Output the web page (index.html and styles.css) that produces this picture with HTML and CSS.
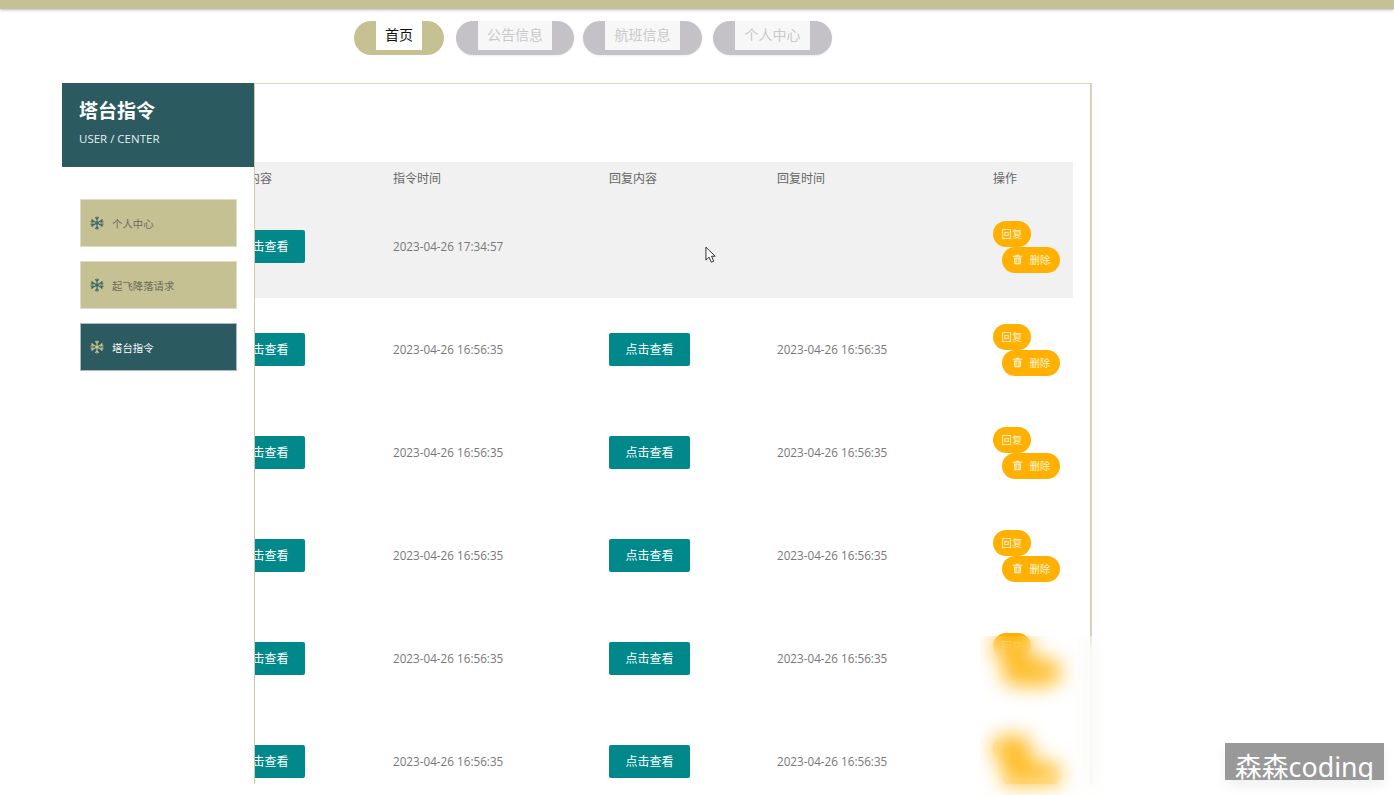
FILE: index.html
```html
<!DOCTYPE html>
<html lang="zh-CN">
<head>
<meta charset="utf-8">
<title>塔台指令</title>
<link rel="stylesheet" href="styles.css">
</head>
<body>
<svg class="defs" width="0" height="0" aria-hidden="true">
  <symbol id="flake" viewBox="0 0 14 14">
    <g fill="none" stroke="currentColor" stroke-width="1.1" stroke-linecap="round">
      <path d="M7 .8v12.400M1.600 3.900l10.800 6.200M1.600 10.100l10.800-6.200"/>
      <path d="M5.500 1.600 7 3l1.500-1.400M5.500 12.400 7 11l1.500 1.400M1 5.900l2.100.1-.7-2.100M13 5.900l-2.100.1.700-2.100M1 8.100l2.100-.1-.7 2.100M13 8.100l-2.100-.1.700 2.100"/>
    </g>
    <circle cx="7" cy="7" r="1.500" fill="currentColor"/>
  </symbol>
  <symbol id="trash" viewBox="0 0 12 12">
    <path fill="currentColor" d="M.8 2h10.400v1.100H.8zM4 .7h4V2H4zM2 3.800h8l-.5 7.500h-7zM3.900 5v5h.9V5zm1.700 0v5h.9V5zm1.600 0v5h.9V5z"/>
  </symbol>
  <symbol id="cursor" viewBox="0 0 14 20">
    <path d="M1 1v14l3.400-3.200 2.400 5.400 2.600-1.100-2.400-5.300H11z" fill="#fff" stroke="#222" stroke-width="1"/>
  </symbol>
</svg>

<header class="topbar"></header>

<nav class="nav">
  <a class="pill pill-active"><span class="pill-label">首页</span></a>
  <a class="pill"><span class="pill-label">公告信息</span></a>
  <a class="pill"><span class="pill-label">航班信息</span></a>
  <a class="pill"><span class="pill-label">个人中心</span></a>
</nav>

<main class="main">
  <aside class="sidebar">
    <div class="side-head">
      <h1 class="side-title">塔台指令</h1>
      <p class="side-sub">USER / CENTER</p>
    </div>
    <ul class="menu">
      <li class="menu-item"><svg class="flake"><use href="#flake"/></svg>个人中心</li>
      <li class="menu-item"><svg class="flake"><use href="#flake"/></svg>起飞降落请求</li>
      <li class="menu-item menu-item-active"><svg class="flake"><use href="#flake"/></svg>塔台指令</li>
    </ul>
  </aside>

  <section class="card">
    <table class="table">
      <colgroup>
        <col class="c1"><col class="c2"><col class="c3"><col class="c4"><col class="c5">
      </colgroup>
      <thead>
        <tr><th>指令内容</th><th>指令时间</th><th>回复内容</th><th>回复时间</th><th>操作</th></tr>
      </thead>
      <tbody>
        <tr class="row-hover">
          <td><button class="view">点击查看</button></td>
          <td class="time">2023-04-26 17:34:57</td>
          <td></td>
          <td></td>
          <td><div class="ops"><button class="op">回复</button><button class="op op-del"><svg class="trash"><use href="#trash"/></svg>删除</button></div></td>
        </tr>
        <tr>
          <td><button class="view">点击查看</button></td>
          <td class="time">2023-04-26 16:56:35</td>
          <td><button class="view">点击查看</button></td>
          <td class="time">2023-04-26 16:56:35</td>
          <td><div class="ops"><button class="op">回复</button><button class="op op-del"><svg class="trash"><use href="#trash"/></svg>删除</button></div></td>
        </tr>
        <tr>
          <td><button class="view">点击查看</button></td>
          <td class="time">2023-04-26 16:56:35</td>
          <td><button class="view">点击查看</button></td>
          <td class="time">2023-04-26 16:56:35</td>
          <td><div class="ops"><button class="op">回复</button><button class="op op-del"><svg class="trash"><use href="#trash"/></svg>删除</button></div></td>
        </tr>
        <tr>
          <td><button class="view">点击查看</button></td>
          <td class="time">2023-04-26 16:56:35</td>
          <td><button class="view">点击查看</button></td>
          <td class="time">2023-04-26 16:56:35</td>
          <td><div class="ops"><button class="op">回复</button><button class="op op-del"><svg class="trash"><use href="#trash"/></svg>删除</button></div></td>
        </tr>
        <tr>
          <td><button class="view">点击查看</button></td>
          <td class="time">2023-04-26 16:56:35</td>
          <td><button class="view">点击查看</button></td>
          <td class="time">2023-04-26 16:56:35</td>
          <td><div class="ops"><button class="op">回复</button><button class="op op-del"><svg class="trash"><use href="#trash"/></svg>删除</button></div></td>
        </tr>
        <tr>
          <td><button class="view">点击查看</button></td>
          <td class="time">2023-04-26 16:56:35</td>
          <td><button class="view">点击查看</button></td>
          <td class="time">2023-04-26 16:56:35</td>
          <td><div class="ops"><button class="op">回复</button><button class="op op-del"><svg class="trash"><use href="#trash"/></svg>删除</button></div></td>
        </tr>
      </tbody>
    </table>
  </section>
</main>

<svg class="cursor"><use href="#cursor"/></svg>
<div class="blur"></div>
<div class="watermark">森森coding</div>
</body>
</html>
```

FILE: styles.css
```css
* { box-sizing: border-box; }

html, body {
  margin: 0;
  height: 795px;
  overflow: hidden;
  background: #fff;
  font-family: "Open Sans", "Noto Sans CJK SC", sans-serif;
  font-size: 12px;
}

.defs { position: absolute; }

.topbar {
  height: 9px;
  background: #c5c193;
  box-shadow: 0 1px 3px rgba(120, 110, 130, .5);
}

.nav {
  display: flex;
  height: 34px;
  margin: 12px 0 28px;
  padding-left: 354px;
}

.pill {
  display: block;
  height: 34px;
  padding: 0 22px;
  border-radius: 17px;
  background: #c4c2c6;
  box-shadow: 0 1px 2px rgba(196, 194, 198, .3);
}
.pill:nth-child(1) { margin-right: 12px; }
.pill:nth-child(2) { margin-right: 9px; }
.pill:nth-child(3) { margin-right: 11px; }
.pill:nth-child(n+3) .pill-label { width: 75px; }

.pill-active {
  background: #c5c193;
  box-shadow: none;
}

.pill-label {
  display: block;
  width: 74px;
  height: 29px;
  background: #f7f7f8;
  color: #c9c9cb;
  font-size: 14px;
  line-height: 27px;
  text-align: center;
}

.pill-active .pill-label {
  width: 46px;
  background: #fff;
  color: #111;
}

.main {
  display: flex;
  align-items: flex-start;
  height: 701px;
  padding-left: 62px;
  overflow: hidden;
}

.sidebar {
  flex: 0 0 192px;
}

.side-head {
  height: 84px;
  padding: 14px 17px 0;
  background: #2b5b60;
  color: #fff;
}

.side-title {
  margin: 0;
  font-size: 19px;
  font-weight: 700;
  line-height: 28px;
}

.side-sub {
  margin: 5px 0 0;
  font-size: 11.500px;
  line-height: 18px;
  color: #e6eeee;
}

.menu {
  display: flex;
  flex-direction: column;
  gap: 14px;
  margin: 32px 0 0 18px;
  padding: 0;
  list-style: none;
}

.menu-item {
  display: flex;
  align-items: center;
  width: 157px;
  height: 48px;
  padding-left: 9px;
  background: #c5c193;
  border: 1px solid #dedcc6;
  color: #6a6a5c;
  font-size: 10.400px;
}

.menu-item-active {
  background: #2b5b60;
  border-color: #a9bcb9;
  color: #fff;
}

.flake {
  flex: none;
  width: 14px;
  height: 14px;
  margin-right: 8px;
  color: #3c6667;
}

.menu-item-active .flake { color: #c5c193; }

.card {
  flex: 0 0 838px;
  height: 701px;
  padding: 78px 0 0;
  overflow: hidden;
  background: #fff;
  border-top: 1px solid #dcd8b4;
  border-left: 1px solid #cfcba6;
  border-right: 2px solid #d6d3b4;
}

.table {
  width: 849px;
  margin-left: -31px;
  border-collapse: collapse;
  table-layout: fixed;
  color: #777;
  font-size: 11.700px;
}

.c1 { width: 169px; }
.c2 { width: 216px; }
.c3 { width: 168px; }
.c4 { width: 216px; }
.c5 { width: 80px; }

.table th {
  height: 33px;
  padding: 0 0 1px;
  background: #f1f1f2;
  color: #666;
  font-size: 12px;
  font-weight: 400;
  text-align: left;
}

.table td {
  height: 103px;
  padding: 0;
  text-align: left;
  vertical-align: middle;
}

.table td.time { padding-bottom: 2px; }

.row-hover td { background: #f1f1f2; }

.view {
  display: block;
  width: 81px;
  height: 33px;
  padding: 0 0 1px;
  border: 0;
  border-radius: 2px;
  background: #00888a;
  color: #fff;
  font: inherit;
  font-size: 12px;
}

.ops {
  display: flex;
  flex-direction: column;
  align-items: flex-start;
}

.op {
  display: flex;
  align-items: center;
  justify-content: center;
  width: 38px;
  height: 26px;
  padding: 0;
  border: 0;
  border-radius: 13px;
  background: #ffb000;
  color: #fff3d6;
  font: inherit;
  font-size: 10.400px;
}

.op-del {
  width: 58px;
  margin-left: 9px;
}

.trash {
  width: 11px;
  height: 11px;
  margin-right: 7px;
}

.cursor {
  position: absolute;
  left: 705px;
  top: 246px;
  width: 13px;
  height: 19px;
}

.blur {
  position: absolute;
  left: 980px;
  top: 636px;
  width: 125px;
  height: 159px;
  -webkit-backdrop-filter: blur(10px);
  backdrop-filter: blur(10px);
}

.watermark {
  position: absolute;
  left: 1225px;
  top: 743px;
  width: 159px;
  height: 37px;
  padding-left: 10px;
  overflow: hidden;
  background: #999;
  box-shadow: 0 6px 12px rgba(0, 0, 0, .06);
  color: #fff;
  font-family: "Noto Sans", "Noto Sans CJK SC", sans-serif;
  font-size: 26.800px;
  line-height: 47px;
  white-space: nowrap;
}
```
